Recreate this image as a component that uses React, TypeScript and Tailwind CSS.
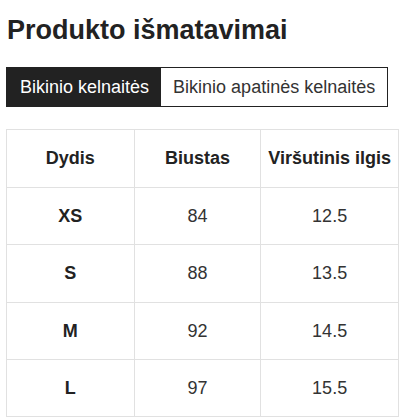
import React from "react";

const rows = [
  ["XS", "84", "12.5"],
  ["S", "88", "13.5"],
  ["M", "92", "14.5"],
  ["L", "97", "15.5"],
];

export default function App() {
  return (
    <div
      className="w-[402px] h-[419px] bg-white text-[#333]"
      style={{ fontFamily: '"Liberation Sans", Arial, sans-serif' }}
    >
      <h1 className="pl-[7px] pt-[14px] text-[27px] leading-[32px] font-bold text-[#222]">
        Produkto išmatavimai
      </h1>
      <div className="mt-[21px] ml-[6px] flex h-[40px] w-fit border border-[#222]">
        <div className="flex items-center justify-center bg-[#222] pl-[13px] pr-[12px] text-[18px] text-white">
          Bikinio kelnaitės
        </div>
        <div className="flex items-center justify-center px-[12px] text-[18px] text-[#333]">
          Bikinio apatinės kelnaitės
        </div>
      </div>
      <table className="mt-[22px] ml-[6px] w-[393px] border-collapse text-[18px] text-center">
        <colgroup>
          <col className="w-[128px]" />
          <col className="w-[127px]" />
          <col className="w-[138px]" />
        </colgroup>
        <thead>
          <tr className="h-[58px]">
            <th className="border border-[#e1e1e1] font-bold text-[#222]">Dydis</th>
            <th className="border border-[#e1e1e1] font-bold text-[#222]">Biustas</th>
            <th className="border border-[#e1e1e1] font-bold text-[#222]">Viršutinis ilgis</th>
          </tr>
        </thead>
        <tbody>
          {rows.map((r, i) => (
            <tr key={r[0]} className={i === 1 ? "h-[58px]" : "h-[57px]"}>
              <td className="border border-[#e1e1e1] font-bold text-[#222]">{r[0]}</td>
              <td className="border border-[#e1e1e1]">{r[1]}</td>
              <td className="border border-[#e1e1e1]">{r[2]}</td>
            </tr>
          ))}
        </tbody>
      </table>
    </div>
  );
}
